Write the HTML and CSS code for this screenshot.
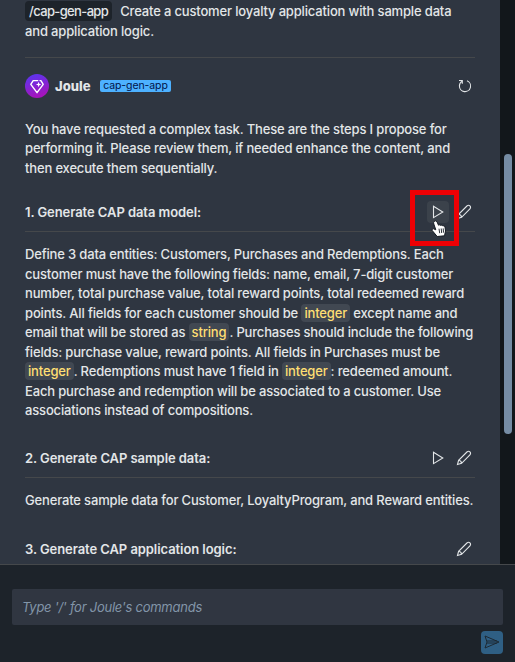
FILE: index.html
```
<!DOCTYPE html>
<html lang="en">
<head>
<meta charset="utf-8">
<title>Joule</title>
<link rel="stylesheet" href="styles.css">
</head>
<body>
<svg class="defs" width="0" height="0">
  <symbol id="play" viewBox="0 0 12 14"><path d="M1.5 1.2V12.6L10.8 7Z"/></symbol>
  <symbol id="pen" viewBox="0 0 16 16"><path d="M1.5 14.5L2.6 10.3L10.9 2Q12.6.6 13.9 1.9Q15.2 3.2 13.9 5L5.6 13.3ZM2.6 10.3Q5.2 10.7 5.6 13.3"/></symbol>
</svg>
<div class="app">
  <div class="viewport">
    <main class="chat">
      <p class="text request"><code class="command">/cap-gen-app</code>Create a customer loyalty application with sample data<br>and application logic.</p>
      <header class="sender">
        <svg class="avatar" viewBox="0 0 24 24">
          <defs><linearGradient id="g" x1="0" y1="0" x2="0.3" y2="1"><stop offset="0" stop-color="#5538f3"/><stop offset="1" stop-color="#a514bc"/></linearGradient></defs>
          <circle cx="12" cy="12" r="12" fill="url(#g)"/>
          <path d="M12.7 6.6H8.2L5.8 10.4L12 18.7L18.2 10.4L15.9 6.6H15" fill="none" stroke="#fff" stroke-width="1.4" stroke-linejoin="round" stroke-linecap="round"/>
          <path d="M13.6 7.8L14.3 9.8L16.3 10.5L14.3 11.2L13.6 13.2L12.9 11.2L10.9 10.5L12.9 9.8Z" fill="#fff"/>
        </svg>
        <strong class="name">Joule</strong>
        <span class="tag">cap-gen-app</span>
        <svg class="refresh" viewBox="0 0 14 14"><path d="M1 1.5H4.3V4.7M4.1 2.1Q1.4 3.8 1.4 7A5.6 5.6 0 1 0 9 1.8"/></svg>
      </header>
      <p class="text intro">You have requested a complex task. These are the steps I propose for<br>performing it. Please review them, if needed enhance the content, and<br>then execute them sequentially.</p>

      <section class="step">
        <div class="step-head">
          <h2>1. Generate CAP data model:</h2>
          <div class="run active"><svg class="play"><use href="#play"/></svg>
            <div class="marker"></div>
            <svg class="hand" viewBox="0 0 16 18"><path d="M3.2 1.5Q5-.1 6 1.8L7.5 5.2Q8.8 4.3 9.7 5.4Q11 4.6 11.8 5.8Q13.6 5.2 14 7L14.5 11L13.5 15.8L6.2 16.5L1.2 10.5Q.6 9 2.5 8.8L4.8 9.8L2.8 4Q2.2 2.3 3.2 1.5Z" fill="#fff" stroke="#141a22" stroke-width="1"/><path d="M8 8.7L8.7 13.2M10.2 8.5L10.7 13M12.2 8.4L12.5 12.6" stroke="#141a22" stroke-width=".9"/></svg>
          </div>
          <svg class="pen"><use href="#pen"/></svg>
        </div>
        <p class="text">Define 3 data entities: Customers, Purchases and Redemptions. Each<br>customer must have the following fields: name, email, 7-digit customer<br>number, total purchase value, total reward points, total redeemed reward<br>points. All fields for each customer should be <code>integer</code> except name and<br>email that will be stored as <code>string</code>. Purchases should include the following<br>fields: purchase value, reward points. All fields in Purchases must be<br><code>integer</code>. Redemptions must have 1 field in <code>integer</code>: redeemed amount.<br>Each purchase and redemption will be associated to a customer. Use<br>associations instead of compositions.</p>
      </section>

      <section class="step second">
        <div class="step-head">
          <h2>2. Generate CAP sample data:</h2>
          <div class="run"><svg class="play"><use href="#play"/></svg></div>
          <svg class="pen"><use href="#pen"/></svg>
        </div>
        <p class="text">Generate sample data for Customer, LoyaltyProgram, and Reward entities.</p>
      </section>

      <section class="step third">
        <div class="step-head">
          <h2>3. Generate CAP application logic:</h2>
          <svg class="pen"><use href="#pen"/></svg>
        </div>
      </section>
    </main>
    <div class="scrollbar"><div class="thumb"></div></div>
  </div>
  <footer class="composer">
    <div class="field">Type '/' for Joule's commands</div>
    <div class="send"><svg viewBox="0 0 16 14"><path d="M1 1L15 7L1 13L3 7ZM3 6H13M3 8H13"/></svg></div>
  </footer>
</div>
</body>
</html>
```
FILE: styles.css
```
* { box-sizing: border-box; }
body { margin: 0; background: #1d232a; font-family: Inter, "Liberation Sans", sans-serif; color: #e3e6e8; }
p, h2 { margin: 0; }
svg { flex: none; display: block; }
.defs { position: absolute; }
.app { width: 515px; height: 662px; display: flex; flex-direction: column; overflow: hidden; }
.viewport { height: 564px; display: flex; overflow: hidden; }
.chat { width: 500px; background: #2f3641; padding: 2px 25px 0 25px; }
.scrollbar { width: 15px; background: #12171b; padding: 154px 3px 0 4px; }
.thumb { height: 280px; border-radius: 4px; background: #758ca4; }
.text { font-size: 13px; line-height: 19.5px; white-space: nowrap; font-weight: 500; letter-spacing: -0.16px; }
code { font: inherit; color: #ffdf72; background: #414852; border-radius: 4px; padding: 1px 3px; }
.command { color: #e3e6e8; background: #1d232a; padding: 2px 4px; margin-right: 8px; letter-spacing: -0.64px; }
.request { height: 56px; border-bottom: 1px solid #45484b; }
.sender { height: 56px; display: flex; align-items: center; }
.avatar { width: 24px; height: 24px; }
.name { font-size: 13px; font-weight: 800; margin-left: 6px; width: 45px; }
.tag { height: 12px; width: 71px; border-radius: 2px; background: #4db1ff; color: #00144a; font-size: 10.5px; line-height: 12px; text-align: center; white-space: nowrap; letter-spacing: -0.1px; }
.refresh { width: 14px; height: 14px; margin-left: auto; margin-right: 3px; }
.refresh path, .play, .pen { fill: none; stroke: #e3e6e8; stroke-width: 1.1; }
.intro { height: 79px; padding-top: 5.5px; }
.step-head { height: 39px; display: flex; align-items: center; border-bottom: 1px solid #45484b; margin-bottom: 13px; }
h2 { font-size: 13px; font-weight: 600; line-height: 20px; flex: 1; white-space: nowrap; letter-spacing: -0.07px; }
.run { width: 22px; height: 22px; border-radius: 4px; padding: 4px 5px; position: relative; margin-right: 7px; }
.run.active { background: #3b424b; }
.play { width: 12px; height: 14px; }
.pen { width: 16px; height: 16px; margin-right: 3px; }
.marker { position: absolute; left: -17px; top: -11px; width: 49px; height: 56px; border: 5px solid #ee0004; }
.hand { position: absolute; left: 4px; top: 19px; width: 16px; height: 18px; }
.second { margin-top: 18px; }
.third { margin-top: 20px; }
.third .step-head { border-color: transparent; }
.composer { height: 98px; background: #1d232a; border-top: 1px solid #45484b; padding: 24px 12px 0; }
.field { height: 36px; border-radius: 2px; background: #303641; padding-left: 10px; font-size: 13px; line-height: 37px; font-style: italic; font-weight: 450; letter-spacing: -0.25px; color: #8295a8; }
.send { width: 22px; height: 23px; border-radius: 4px; background: #2f5f84; margin: 6px 0 0 auto; padding: 4px 3px; }
.send svg { width: 16px; height: 14px; fill: none; stroke: #1d2933; stroke-width: 1; }
```
